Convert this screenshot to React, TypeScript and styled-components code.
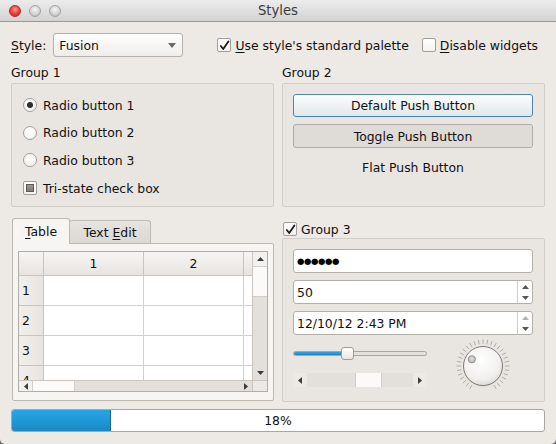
import React from "react";
import styled, { createGlobalStyle } from "styled-components";

const Global = createGlobalStyle`
  html, body { margin: 0; padding: 0; }
  body {
    background: #6e6e6e;
    font-family: "DejaVu Sans", "Liberation Sans", sans-serif;
    font-size: 12.4px;
    color: #111111;
  }
  #root { width: 556px; height: 444px; }
  * { box-sizing: border-box; }
`;

const Window = styled.div`
  width: 556px;
  height: 444px;
  background: #edeae6;
  border-radius: 0 0 5px 5px;
  overflow: hidden;
  display: flex;
  flex-direction: column;
`;

const TitleBar = styled.div`
  height: 22px;
  flex: none;
  display: grid;
  grid-template-columns: 1fr auto 1fr;
  align-items: center;
  background: linear-gradient(#ececec, #d3d3d3);
  border-bottom: 1px solid #999999;
`;

const Lights = styled.div`
  display: flex;
  gap: 8px;
  padding-left: 9px;
  align-items: center;
`;

const Light = styled.span<{ $red?: boolean }>`
  width: 12px;
  height: 12px;
  border-radius: 50%;
  background: ${(p) =>
    p.$red
      ? "radial-gradient(circle at 50% 35%, #ff9a94 0%, #ec3b33 55%, #c0231c 100%)"
      : "radial-gradient(circle at 50% 35%, #f7f7f7 0%, #d4d4d4 55%, #b5b5b5 100%)"};
  border: 1px solid ${(p) => (p.$red ? "#a3302b" : "#a2a2a2")};
`;

const Title = styled.div`
  font-size: 13.2px;
  color: #3a3a3a;
`;

const Body = styled.div`
  flex: 1;
  display: flex;
  flex-direction: column;
  padding: 11px 11px 0 11px;
`;

const TopRow = styled.div`
  display: flex;
  align-items: center;
  height: 24px;
`;

const Mn = styled.span`
  text-decoration: underline;
  text-underline-offset: 2px;
  text-decoration-thickness: 1px;
`;

const FieldLabel = styled.span`
  margin-right: 7px;
`;

const Combo = styled.div`
  width: 130px;
  height: 24px;
  display: flex;
  align-items: center;
  justify-content: space-between;
  padding: 0 6px 0 5px;
  border: 1px solid #b4b1ac;
  border-radius: 3px;
  background: linear-gradient(#fefefe, #efedea);
`;

const Spacer = styled.div`
  flex: 1;
`;

const CheckItem = styled.div<{ $ml?: number; $mr?: number }>`
  display: flex;
  align-items: center;
  gap: 4px;
  margin-left: ${(p) => p.$ml ?? 0}px;
  margin-right: ${(p) => p.$mr ?? 0}px;
  white-space: nowrap;
`;

const Box = styled.span`
  width: 14px;
  height: 14px;
  flex: none;
  border: 1px solid #a19e99;
  border-radius: 2px;
  background: linear-gradient(#ffffff, #f3f2f0);
  display: grid;
  place-items: center;
`;

const Partial = styled.span`
  width: 8px;
  height: 8px;
  background: linear-gradient(#9a9793, #807d79);
  border: 1px solid #5c5955;
`;

const RadioCircle = styled.span<{ $on?: boolean }>`
  width: 14px;
  height: 14px;
  flex: none;
  border-radius: 50%;
  border: 1px solid #a19e99;
  background: radial-gradient(circle at 50% 35%, #ffffff, #f0efed);
  display: grid;
  place-items: center;
  &::after {
    content: "";
    width: 6px;
    height: 6px;
    border-radius: 50%;
    background: #2e2e2e;
    display: ${(p) => (p.$on ? "block" : "none")};
  }
`;

const OptionRow = styled.div`
  height: 18px;
  display: flex;
  align-items: center;
  gap: 6px;
`;

const TwoCols = styled.div<{ $mt: number; $h?: number }>`
  display: grid;
  grid-template-columns: 1fr 1fr;
  column-gap: 8px;
  margin-top: ${(p) => p.$mt}px;
  height: ${(p) => (p.$h ? `${p.$h}px` : "auto")};
`;

const Column = styled.div`
  display: flex;
  flex-direction: column;
  min-width: 0;
`;

const GroupTitle = styled.div`
  height: 19px;
  line-height: 17px;
`;

const GroupFrame = styled.div<{ $h: number; $pad: string; $gap: number }>`
  height: ${(p) => p.$h}px;
  border: 1px solid #d1cdc7;
  border-radius: 2px;
  background: #e9e6e2;
  padding: ${(p) => p.$pad};
  display: flex;
  flex-direction: column;
  gap: ${(p) => p.$gap}px;
`;

const PushButton = styled.div<{ $variant: "default" | "toggle" | "flat" }>`
  height: ${(p) => (p.$variant === "default" ? 23 : 24)}px;
  display: grid;
  place-items: center;
  border-radius: 3px;
  border: 1px solid
    ${(p) =>
      p.$variant === "default" ? "#4a86b5" : p.$variant === "toggle" ? "#afaca7" : "transparent"};
  background: ${(p) =>
    p.$variant === "default"
      ? "linear-gradient(#fcfdfd, #e1e7eb)"
      : p.$variant === "toggle"
      ? "#dfdcd8"
      : "transparent"};
`;

const TabBar = styled.div`
  display: flex;
  align-items: flex-end;
  height: 25px;
  padding-left: 1px;
`;

const Tab = styled.div<{ $active?: boolean; $w: number }>`
  position: relative;
  z-index: ${(p) => (p.$active ? 1 : 0)};
  width: ${(p) => p.$w}px;
  height: ${(p) => (p.$active ? 26 : 23)}px;
  margin-bottom: ${(p) => (p.$active ? -1 : 0)}px;
  margin-left: ${(p) => (p.$active ? 0 : -1)}px;
  border: 1px solid #bcb8b2;
  border-bottom: none;
  border-radius: 3px 3px 0 0;
  background: ${(p) => (p.$active ? "#f7f5f2" : "linear-gradient(#e7e4e0, #dbd8d3)")};
  display: grid;
  place-items: center;
  padding-top: ${(p) => (p.$active ? 0 : 1)}px;
`;

const TabPanel = styled.div`
  height: 158px;
  margin-left: 1px;
  border: 1px solid #bcb8b2;
  border-radius: 0 2px 2px 2px;
  background: #f7f5f2;
  padding: 7px 5px 8px;
`;

const TableFrame = styled.div`
  height: 141px;
  border: 1px solid #b0ada8;
  background: #ffffff;
  display: grid;
  grid-template-columns: minmax(0, 1fr) 15px;
  grid-template-rows: minmax(0, 1fr) 11px;
`;

const Viewport = styled.div`
  overflow: hidden;
  min-width: 0;
  display: grid;
  grid-template-columns: 25px 100px 100px 100px;
  grid-template-rows: 24px;
  grid-auto-rows: 30px;
  align-content: start;
`;

const HeaderCell = styled.div<{ $row?: boolean }>`
  background: ${(p) =>
    p.$row ? "linear-gradient(90deg, #f1efec, #e8e5e1)" : "linear-gradient(#f7f5f3, #e7e4e0)"};
  border-right: 1px solid #c8c5c0;
  border-bottom: 1px solid #c8c5c0;
  display: flex;
  align-items: center;
  justify-content: ${(p) => (p.$row ? "flex-start" : "center")};
  padding-left: ${(p) => (p.$row ? 3 : 0)}px;
`;

const Cell = styled.div`
  background: #ffffff;
  border-right: 1px solid #d3d0cb;
  border-bottom: 1px solid #d3d0cb;
`;

const VScroll = styled.div`
  border-left: 1px solid #c9c6c1;
  display: flex;
  flex-direction: column;
  background: #e3e0dc;
`;

const HScroll = styled.div`
  border-top: 1px solid #c9c6c1;
  display: flex;
  background: #e3e0dc;
`;

const Corner = styled.div`
  border-top: 1px solid #c9c6c1;
  border-left: 1px solid #c9c6c1;
  background: #ece9e5;
`;

const ScrollBtn = styled.div<{ $len: number; $vertical?: boolean; $bg?: string }>`
  flex: none;
  ${(p) => (p.$vertical ? `height: ${p.$len}px;` : `width: ${p.$len}px;`)}
  background: ${(p) => p.$bg ?? "#f3f1ee"};
  display: grid;
  place-items: center;
`;

const ScrollHandle = styled.div<{ $len: number; $vertical?: boolean }>`
  flex: none;
  ${(p) =>
    p.$vertical
      ? `height: ${p.$len}px; border-top: 1px solid #d2cfca; border-bottom: 1px solid #d2cfca;`
      : `width: ${p.$len}px; border-left: 1px solid #d2cfca; border-right: 1px solid #d2cfca;`}
  background: #fbfaf9;
`;

const ScrollTrack = styled.div<{ $len?: number }>`
  flex: ${(p) => (p.$len ? `0 0 ${p.$len}px` : "1")};
  background: #e3e0dc;
`;

const Group3Header = styled.div`
  height: 20px;
  padding-top: 2px;
  padding-left: 1px;
  display: flex;
  align-items: center;
  gap: 4px;
`;

const LineEdit = styled.div`
  height: 24px;
  flex: none;
  border: 1px solid #b3b0ab;
  border-radius: 3px;
  background: #ffffff;
  display: flex;
  align-items: stretch;
`;

const EditText = styled.div`
  flex: 1;
  display: flex;
  align-items: center;
  padding-left: 3px;
  white-space: nowrap;
`;

const Dots = styled.span`
  font-size: 8.5px;
  letter-spacing: -0.4px;
  color: #000;
`;

const SpinButtons = styled.div`
  width: 15px;
  border-left: 1px solid #d0cdc8;
  display: flex;
  flex-direction: column;
`;

const SpinHalf = styled.div`
  flex: 1;
  display: grid;
  place-items: center;
`;

const ControlsRow = styled.div`
  display: flex;
  margin-top: -5px;
`;

const SliderCol = styled.div`
  width: 134px;
  display: flex;
  flex-direction: column;
`;

const SliderArea = styled.div`
  height: 32px;
  position: relative;
  display: flex;
  align-items: center;
`;

const Groove = styled.div`
  flex: 1;
  height: 5px;
  border: 1px solid #a8a5a0;
  border-radius: 3px;
  background: #e4e1dd;
  display: flex;
  overflow: hidden;
`;

const GrooveFill = styled.div`
  background: linear-gradient(#3aa2e0, #1f84c3);
  border-right: 1px solid #1f6aa0;
`;

const SliderHandle = styled.div`
  position: absolute;
  top: 10px;
  width: 13px;
  height: 13px;
  border: 1px solid #9f9c97;
  border-radius: 3px;
  background: linear-gradient(#ffffff, #e8e6e3);
`;

const SmallScroll = styled.div`
  height: 14px;
  margin-top: 4px;
  display: flex;
`;

const DialWrap = styled.div`
  margin-left: 26px;
  margin-top: -1px;
  width: 60px;
  height: 60px;
`;

const Progress = styled.div`
  margin-top: 7px;
  height: 23px;
  flex: none;
  border: 1px solid #aaa7a2;
  border-radius: 3px;
  background: #ffffff;
  display: grid;
  overflow: hidden;
`;

const Chunk = styled.div`
  grid-area: 1 / 1;
  justify-self: start;
  height: 100%;
  border-right: 1px solid #1d6595;
  background: linear-gradient(#26a6e6, #1b89c5);
`;

const ProgressText = styled.div`
  grid-area: 1 / 1;
  display: grid;
  place-items: center;
`;

type Dir = "up" | "down" | "left" | "right";

const Arrow = ({ dir, color = "#3c3c3c", size = 7 }: { dir: Dir; color?: string; size?: number }) => {
  const h = Math.round(size * 0.6);
  const pts: Record<Dir, string> = {
    up: `0,${h} ${size},${h} ${size / 2},0`,
    down: `0,0 ${size},0 ${size / 2},${h}`,
    left: `${h},0 ${h},${size} 0,${size / 2}`,
    right: `0,0 0,${size} ${h},${size / 2}`,
  };
  const vertical = dir === "up" || dir === "down";
  return (
    <svg width={vertical ? size : h} height={vertical ? h : size} style={{ display: "block" }}>
      <polygon points={pts[dir]} fill={color} />
    </svg>
  );
};

const CheckMark = () => (
  <svg width="11" height="11" viewBox="0 0 11 11" style={{ display: "block" }}>
    <path
      d="M1.8 6 L4.2 9 L9.4 1.4"
      fill="none"
      stroke="#1c1c1c"
      strokeWidth="1.8"
      strokeLinecap="round"
      strokeLinejoin="round"
    />
  </svg>
);

const Dial = ({ angle }: { angle: number }) => {
  const c = 30;
  const notches = Array.from({ length: 31 }, (_, i) => {
    const a = ((240 - i * 10) * Math.PI) / 180;
    return {
      x1: c + 22 * Math.cos(a),
      y1: c - 22 * Math.sin(a),
      x2: c + 26.5 * Math.cos(a),
      y2: c - 26.5 * Math.sin(a),
    };
  });
  const ra = (angle * Math.PI) / 180;
  const dx = c + 13 * Math.cos(ra);
  const dy = c - 13 * Math.sin(ra);
  return (
    <svg width="60" height="60" viewBox="0 0 60 60" style={{ display: "block" }}>
      <defs>
        <radialGradient id="knob" cx="45%" cy="35%" r="70%">
          <stop offset="0%" stopColor="#ffffff" />
          <stop offset="70%" stopColor="#f1f0ee" />
          <stop offset="100%" stopColor="#d9d7d4" />
        </radialGradient>
        <radialGradient id="dot" cx="50%" cy="40%" r="60%">
          <stop offset="0%" stopColor="#e2e0dd" />
          <stop offset="100%" stopColor="#b7b5b1" />
        </radialGradient>
      </defs>
      {notches.map((n, i) => (
        <line key={i} x1={n.x1} y1={n.y1} x2={n.x2} y2={n.y2} stroke="#a9a6a1" strokeWidth="0.9" />
      ))}
      <circle cx={c} cy={c + 0.8} r="19.8" fill="#c9c6c2" opacity="0.6" />
      <circle cx={c} cy={c} r="19.5" fill="url(#knob)" stroke="#7e7b77" strokeWidth="1" />
      <circle cx={dx} cy={dy} r="3.6" fill="url(#dot)" stroke="#8b8884" strokeWidth="0.9" />
    </svg>
  );
};

const rows = [1, 2, 3, 4];

export default function App() {
  const sliderValue = 0.4;
  const sliderLeft = Math.round(sliderValue * (134 - 13));
  const progress = 18;
  return (
    <>
      <Global />
      <Window>
        <TitleBar>
          <Lights>
            <Light $red />
            <Light />
            <Light />
          </Lights>
          <Title>Styles</Title>
          <div />
        </TitleBar>
        <Body>
          <TopRow>
            <FieldLabel>
              <Mn>S</Mn>tyle:
            </FieldLabel>
            <Combo>
              <span>Fusion</span>
              <Arrow dir="down" color="#6a6a6a" size={8} />
            </Combo>
            <Spacer />
            <CheckItem>
              <Box>
                <CheckMark />
              </Box>
              <span>
                <Mn>U</Mn>se style's standard palette
              </span>
            </CheckItem>
            <CheckItem $ml={13} $mr={7}>
              <Box />
              <span>
                <Mn>D</Mn>isable widgets
              </span>
            </CheckItem>
          </TopRow>

          <TwoCols $mt={7}>
            <Column>
              <GroupTitle>Group 1</GroupTitle>
              <GroupFrame $h={124} $pad="12px 11px 0 11px" $gap={9.7}>
                <OptionRow>
                  <RadioCircle $on />
                  <span>Radio button 1</span>
                </OptionRow>
                <OptionRow>
                  <RadioCircle />
                  <span>Radio button 2</span>
                </OptionRow>
                <OptionRow>
                  <RadioCircle />
                  <span>Radio button 3</span>
                </OptionRow>
                <OptionRow>
                  <Box>
                    <Partial />
                  </Box>
                  <span>Tri-state check box</span>
                </OptionRow>
              </GroupFrame>
            </Column>
            <Column>
              <GroupTitle>Group 2</GroupTitle>
              <GroupFrame $h={124} $pad="10px 11px 0 10px" $gap={7}>
                <PushButton $variant="default">Default Push Button</PushButton>
                <PushButton $variant="toggle">Toggle Push Button</PushButton>
                <PushButton $variant="flat">Flat Push Button</PushButton>
              </GroupFrame>
            </Column>
          </TwoCols>

          <TwoCols $mt={11} $h={184}>
            <Column>
              <TabBar>
                <Tab $active $w={58}>
                  <span>
                    <Mn>T</Mn>able
                  </span>
                </Tab>
                <Tab $w={82}>
                  <span>
                    Text <Mn>E</Mn>dit
                  </span>
                </Tab>
              </TabBar>
              <TabPanel>
                <TableFrame>
                  <Viewport>
                    <HeaderCell />
                    <HeaderCell>1</HeaderCell>
                    <HeaderCell>2</HeaderCell>
                    <HeaderCell>3</HeaderCell>
                    {rows.map((r) => (
                      <React.Fragment key={r}>
                        <HeaderCell $row>{r}</HeaderCell>
                        <Cell />
                        <Cell />
                        <Cell />
                      </React.Fragment>
                    ))}
                  </Viewport>
                  <VScroll>
                    <ScrollBtn $vertical $len={14}>
                      <Arrow dir="up" />
                    </ScrollBtn>
                    <ScrollHandle $vertical $len={31} />
                    <ScrollTrack />
                    <ScrollBtn $vertical $len={14} $bg="#e3e0dc">
                      <Arrow dir="down" />
                    </ScrollBtn>
                  </VScroll>
                  <HScroll>
                    <ScrollBtn $len={13}>
                      <Arrow dir="left" />
                    </ScrollBtn>
                    <ScrollHandle $len={43} />
                    <ScrollTrack />
                    <ScrollBtn $len={13} $bg="#e3e0dc">
                      <Arrow dir="right" />
                    </ScrollBtn>
                  </HScroll>
                  <Corner />
                </TableFrame>
              </TabPanel>
            </Column>
            <Column>
              <Group3Header>
                <Box>
                  <CheckMark />
                </Box>
                <span>Group 3</span>
              </Group3Header>
              <GroupFrame $h={164} $pad="10px 11px 0 10px" $gap={7}>
                <LineEdit>
                  <EditText>
                    <Dots>●●●●●●</Dots>
                  </EditText>
                </LineEdit>
                <LineEdit>
                  <EditText>50</EditText>
                  <SpinButtons>
                    <SpinHalf>
                      <Arrow dir="up" color="#555" size={7} />
                    </SpinHalf>
                    <SpinHalf>
                      <Arrow dir="down" color="#555" size={7} />
                    </SpinHalf>
                  </SpinButtons>
                </LineEdit>
                <LineEdit>
                  <EditText>12/10/12 2:43 PM</EditText>
                  <SpinButtons>
                    <SpinHalf>
                      <Arrow dir="up" color="#b4b1ad" size={7} />
                    </SpinHalf>
                    <SpinHalf>
                      <Arrow dir="down" color="#555" size={7} />
                    </SpinHalf>
                  </SpinButtons>
                </LineEdit>
                <ControlsRow>
                  <SliderCol>
                    <SliderArea>
                      <Groove>
                        <GrooveFill style={{ width: `${sliderLeft + 2}px` }} />
                      </Groove>
                      <SliderHandle style={{ left: `${sliderLeft}px` }} />
                    </SliderArea>
                    <SmallScroll>
                      <ScrollBtn $len={14} $bg="#edeae6">
                        <Arrow dir="left" />
                      </ScrollBtn>
                      <ScrollTrack $len={48} />
                      <ScrollHandle $len={27} />
                      <ScrollTrack />
                      <ScrollBtn $len={14} $bg="#edeae6">
                        <Arrow dir="right" />
                      </ScrollBtn>
                    </SmallScroll>
                  </SliderCol>
                  <DialWrap>
                    <Dial angle={149} />
                  </DialWrap>
                </ControlsRow>
              </GroupFrame>
            </Column>
          </TwoCols>

          <Progress>
            <Chunk style={{ width: `${Math.round((progress / 100) * 550)}px` }} />
            <ProgressText>{progress}%</ProgressText>
          </Progress>
        </Body>
      </Window>
    </>
  );
}
